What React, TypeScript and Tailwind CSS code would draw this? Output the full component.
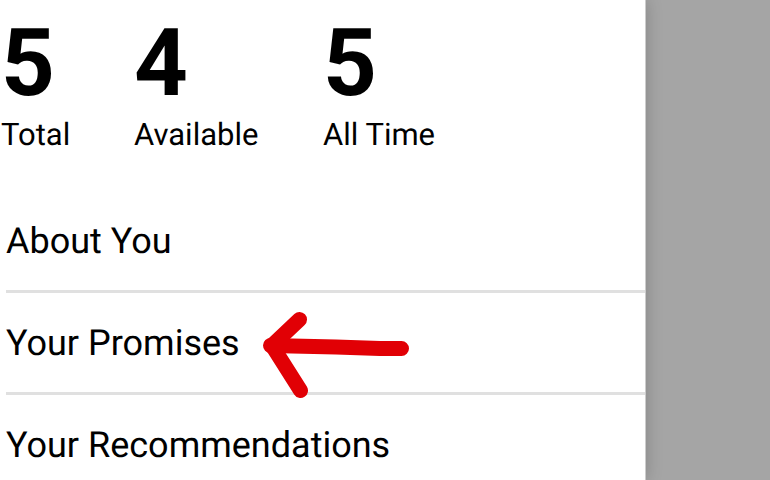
const stats = [
  { value: 5, label: "Total", place: "pl-[1px] w-[134px]" },
  { value: 4, label: "Available", place: "w-[189px]" },
  { value: 5, label: "All Time", place: "" },
];
const links = ["About You", "Your Promises", "Your Recommendations"];

function Arrow() {
  return (
    <svg className="absolute top-[18px] left-[256px] h-[88px] w-[150px]" viewBox="262 311 150 88" fill="none" stroke="#e10005" strokeWidth="15" strokeLinecap="round" strokeLinejoin="round" aria-hidden="true">
      <path d="M270.500 345.500L292 346L336 347L380 348.500L401.500 348.500" />
      <path d="M299.500 319.500L272 345.500L300.500 390.500" />
    </svg>
  );
}

export default function App() {
  return (
    <div className="flex h-screen overflow-hidden bg-[#a5a5a5] font-['Roboto',sans-serif] text-black [text-rendering:geometricPrecision]">
      <main className="mr-[124px] min-w-0 flex-1 border-r border-[#cccccc] bg-white shadow-[0_0_16px_rgba(0,0,0,0.2)]">
        <dl className="flex h-[191px] pt-[13px]">
          {stats.map((s) => (
            <div key={s.label} className={`flex shrink-0 flex-col-reverse justify-end ${s.place}`}>
              <dt className="text-[31px] leading-[44px]">{s.label}</dt>
              <dd className="text-[94px] leading-[100px] font-bold">{s.value}</dd>
            </div>
          ))}
        </dl>
        <nav className="pl-[6px]">
          {links.map((l) => (
            <a key={l} href="#" className="relative flex h-[102px] items-center border-b-3 border-[#e0e0e0] pt-[1px] text-[36px] leading-[44px] whitespace-nowrap">
              {l}
              {l === "Your Promises" && <Arrow />}
            </a>
          ))}
        </nav>
      </main>
    </div>
  );
}
